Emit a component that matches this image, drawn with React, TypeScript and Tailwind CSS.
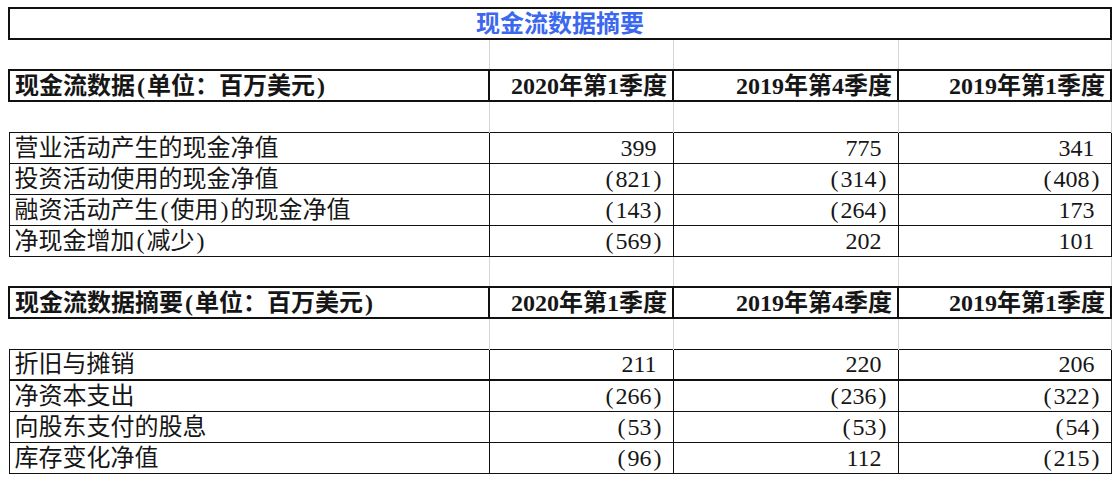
const columns = ["2020年第1季度", "2019年第4季度", "2019年第1季度"];

type Row = { label: string; values: number[]; thickBottom?: boolean };

const operating: Row[] = [
  { label: "营业活动产生的现金净值", values: [399, 775, 341] },
  { label: "投资活动使用的现金净值", values: [-821, -314, -408] },
  { label: "融资活动产生(使用)的现金净值", values: [-143, -264, 173] },
  { label: "净现金增加(减少)", values: [-569, 202, 101] },
];

const summary: Row[] = [
  { label: "折旧与摊销", values: [211, 220, 206], thickBottom: true },
  { label: "净资本支出", values: [-266, -236, -322] },
  { label: "向股东支付的股息", values: [-53, -53, -54] },
  { label: "库存变化净值", values: [-96, 112, -215] },
];

// half-width bracket, the sheet font gives them a full digit's width
function Paren({ ch }: { ch: string }) {
  return <span className="inline-block w-[12px] text-center">{ch}</span>;
}

function Label({ text }: { text: string }) {
  const parts = text.split(/([()])/);
  return (
    <>
      {parts.map((p, i) =>
        p === "(" || p === ")" ? <Paren key={i} ch={p} /> : <span key={i}>{p}</span>
      )}
    </>
  );
}

// accounting style: negatives in brackets, positives keep room for the ")"
function Amount({ value }: { value: number }) {
  if (value < 0)
    return (
      <>
        <Paren ch="(" />
        {Math.abs(value)}
        <Paren ch=")" />
      </>
    );
  return (
    <>
      {value}
      <span className="inline-block w-[7px]" />
    </>
  );
}

function BlankRow() {
  return (
    <tr className="h-[31px]">
      <td className="border-r border-[#d6d6d6]" />
      <td className="border-r border-[#d6d6d6]" />
      <td className="border-r border-[#d6d6d6]" />
      <td className="border-r border-[#d6d6d6]" />
    </tr>
  );
}

function HeaderRow({ title }: { title: string }) {
  return (
    <tr className="h-[31px] font-bold">
      <td className="border-2 border-[#111] pl-[5px] text-left">
        <Label text={title} />
      </td>
      {columns.map((c) => (
        <td key={c} className="border-2 border-[#111] pr-[5px] text-right">
          {c}
        </td>
      ))}
    </tr>
  );
}

function DataRows({ rows }: { rows: Row[] }) {
  return (
    <>
      {rows.map((r) => (
        <tr key={r.label} className="h-[31px]">
          <td
            className={`border border-[#111] pl-[5px] text-left ${
              r.thickBottom ? "border-b-2" : ""
            }`}
          >
            <Label text={r.label} />
          </td>
          {r.values.map((v, i) => (
            <td
              key={i}
              className={`border border-[#111] pr-[9px] text-right ${
                r.thickBottom ? "border-b-2" : ""
              }`}
            >
              <Amount value={v} />
            </td>
          ))}
        </tr>
      ))}
    </>
  );
}

export default function App() {
  return (
    <div className="h-[479px] w-[1119px] overflow-hidden bg-white pl-[8px] pt-[7px]">
      <table
        className="w-[1102px] table-fixed border-collapse text-[24px] leading-[28px] text-[#161616]"
        style={{ fontFamily: '"Liberation Serif", "Noto Sans CJK SC", serif' }}
      >
        <colgroup>
          <col className="w-[480px]" />
          <col className="w-[184px]" />
          <col className="w-[225px]" />
          <col className="w-[213px]" />
        </colgroup>
        <tbody>
          {/* Title */}
          <tr className="h-[31px]">
            <td
              colSpan={4}
              className="border-2 border-[#111] text-center font-bold text-[#3b68ee]"
            >
              现金流数据摘要
            </td>
          </tr>
          <BlankRow />

          {/* Cash flow data */}
          <HeaderRow title="现金流数据(单位：百万美元)" />
          <BlankRow />
          <DataRows rows={operating} />
          <BlankRow />

          {/* Cash flow summary */}
          <HeaderRow title="现金流数据摘要(单位：百万美元)" />
          <BlankRow />
          <DataRows rows={summary} />
        </tbody>
      </table>
    </div>
  );
}
